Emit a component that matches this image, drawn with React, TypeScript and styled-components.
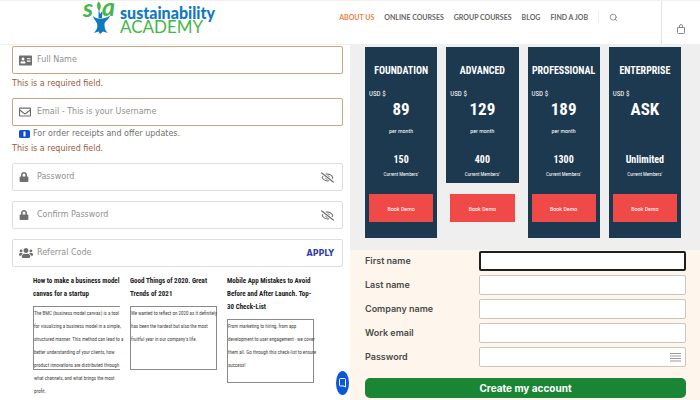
import React from 'react';
import styled, { createGlobalStyle } from 'styled-components';
import { FaAddressCard, FaLock, FaRegEnvelope, FaRegEyeSlash, FaUsers } from 'react-icons/fa';
import { Search } from 'lucide-react';

const condensed = '"Roboto Condensed", Roboto, "Liberation Sans", sans-serif';
const wide = '"DejaVu Sans", "Noto Sans", sans-serif';

const GlobalStyle = createGlobalStyle`
  *, *::before, *::after { box-sizing: border-box; }
  body { margin: 0; background: #fff; font-family: ${wide}; }
  h2, h3, p { margin: 0; }
  button, input { font: inherit; }
  button { cursor: pointer; }
  a { text-decoration: none; }
`;

const Page = styled.div`
  display: flex;
  flex-direction: column;
  min-height: 100vh;
`;

/* Header */
const Header = styled.header`
  display: flex;
  align-items: stretch;
  min-height: 45px;
  border-top: 1px solid #f3f1f0;
  border-bottom: 1px solid #f0eeec;
  background: #fff;
`;

const Brand = styled.a`
  display: flex;
  align-items: flex-start;
  gap: 2px;
  margin-left: 82px;
`;

const Wordmark = styled.span`
  display: flex;
  flex-direction: column;
  padding-top: 5px;
  font-family: Lato, sans-serif;
`;

const WordTop = styled.span`
  font-size: 16px;
  line-height: 14px;
  font-weight: 900;
  color: #1279bd;
`;

const WordBottom = styled.span`
  font-size: 17px;
  line-height: 14px;
  color: #45b649;
`;

const Nav = styled.nav`
  display: flex;
  align-items: center;
  align-self: flex-start;
  gap: 10px;
  height: 32px;
  margin-left: auto;
  font-family: Lato, sans-serif;
`;

const NavLink = styled.a<{ $active?: boolean }>`
  font-size: 7px;
  line-height: 10px;
  font-weight: 700;
  white-space: nowrap;
  color: ${p => (p.$active ? '#f0803c' : '#666')};
`;

const SearchButton = styled.button`
  display: flex;
  align-items: center;
  height: 12px;
  padding: 0 0 0 10px;
  border: 0;
  border-left: 1px solid #eee;
  background: none;
  color: #777;
`;

const CartButton = styled.button`
  display: flex;
  align-items: center;
  justify-content: center;
  width: 39px;
  margin-left: 43px;
  padding: 12px 0 0;
  border: 0;
  border-left: 1px solid #e4e4e4;
  background: none;
`;

/* Columns */
const Columns = styled.main`
  display: grid;
  grid-template-columns: repeat(2, minmax(0, 1fr));
  flex: 1;
`;

const LeftPanel = styled.div`
  position: relative;
  padding-top: 1px;
  background: #fff;
`;

const RightPanel = styled.div`
  display: flex;
  flex-direction: column;
`;

const SignUpForm = styled.form`
  display: flex;
  flex-direction: column;
  padding: 0 7px 0 12px;
`;

const Field = styled.div<{ $invalid?: boolean; $gap?: number }>`
  display: flex;
  align-items: center;
  gap: 4px;
  height: 28px;
  margin-top: ${p => p.$gap ?? 0}px;
  padding: 0 8px 0 6px;
  border: 1px solid ${p => (p.$invalid ? '#d0a37c' : '#dedede')};
  border-radius: 2px;
  color: #6e6e6e;
`;

const FieldIcon = styled.span`
  display: flex;
  width: 14px;
`;

const FieldInput = styled.input`
  flex: 1;
  min-width: 0;
  padding: 0;
  border: 0;
  outline: 0;
  background: none;
  font-size: 8px;
  line-height: 14px;
  color: #555;
  &::placeholder { color: #909090; opacity: 1; }
`;

const EyeButton = styled.button`
  display: flex;
  padding: 0;
  border: 0;
  background: none;
  color: #666;
`;

const ApplyButton = styled.button`
  padding: 0;
  border: 0;
  background: none;
  font-size: 8px;
  font-weight: 700;
  color: #2f3fa8;
`;

const FieldError = styled.p<{ $height: number }>`
  font-size: 8px;
  line-height: ${p => p.$height}px;
  color: #9a5a3c;
`;

const FieldNote = styled.p`
  display: flex;
  align-items: center;
  gap: 3px;
  padding-left: 7px;
  font-size: 8px;
  line-height: 16px;
  color: #707070;
`;

const Articles = styled.section`
  display: grid;
  grid-template-columns: repeat(3, minmax(0, 1fr));
  gap: 10px;
  padding: 8px 36px 0 33px;
  font-family: ${condensed};
`;

const ArticleTitle = styled.h3`
  font-size: 7px;
  line-height: 13px;
  font-weight: 700;
  white-space: nowrap;
  color: #222;
`;

const ArticleBox = styled.div<{ $open?: boolean }>`
  height: 64px;
  margin-top: 5px;
  border: 1px solid #8a8a8a;
  border-right-width: ${p => (p.$open ? 0 : 1)}px;
`;

const ArticleText = styled.p`
  font-size: 5px;
  line-height: 13px;
  white-space: nowrap;
  color: #444;
`;

const Line = styled.span`
  display: block;
`;

const ChatButton = styled.button`
  position: absolute;
  right: 1px;
  bottom: 5px;
  display: flex;
  align-items: center;
  justify-content: center;
  width: 13px;
  height: 24px;
  padding: 0;
  border: 0;
  border-radius: 50%;
  background: #0b57d8;
`;

/* Pricing */
const Pricing = styled.section`
  display: grid;
  grid-template-columns: repeat(4, minmax(0, 1fr));
  gap: 9px;
  padding: 2px 19px 12px 15px;
  background: #efefef;
  font-family: ${condensed};
  text-align: center;
  color: #fff;
`;

const Plan = styled.article`
  display: flex;
  flex-direction: column;
`;

const PlanInfo = styled.div`
  padding: 16px 4px 3px;
  background: #1d394f;
`;

const PlanName = styled.h2`
  font-size: 10px;
  line-height: 16px;
  font-weight: 700;
  display: flex;
  justify-content: center;
  white-space: nowrap;
`;

const Currency = styled.p`
  margin-top: 9px;
  font-size: 7px;
  line-height: 12px;
  text-align: left;
`;

const Price = styled.p`
  font-size: 17px;
  line-height: 18px;
  font-weight: 700;
`;

const Period = styled.p`
  height: 14px;
  margin-top: 6px;
  font-size: 6px;
  line-height: 14px;
`;

const Members = styled.p`
  margin-top: 14px;
  font-size: 10px;
  line-height: 16px;
  font-weight: 700;
`;

const MembersLabel = styled.p`
  font-size: 5px;
  line-height: 12px;
`;

const PlanAction = styled.div<{ $bare?: boolean }>`
  padding: 11px 4px 16px;
  background: ${p => (p.$bare ? 'transparent' : '#1d394f')};
`;

const DemoButton = styled.button`
  display: block;
  width: 100%;
  height: 28px;
  padding: 0;
  border: 0;
  background: #ef4a47;
  font-size: 6px;
  color: #fff;
`;

/* Account form */
const AccountForm = styled.form`
  display: flex;
  flex: 1;
  flex-direction: column;
  gap: 4px;
  padding: 1px 14px 2px 15px;
  background: #fef6ed;
  font-family: Inter, sans-serif;
`;

const AccountRow = styled.div`
  display: grid;
  grid-template-columns: 114px 1fr;
  align-items: center;
`;

const AccountLabel = styled.label`
  font-size: 9px;
  line-height: 14px;
  font-weight: 600;
  color: #4a4a48;
`;

const InputWrap = styled.div<{ $active?: boolean }>`
  display: flex;
  align-items: center;
  height: 20px;
  padding: 0 4px;
  border: ${p => (p.$active ? '2px solid #1f1f1f' : '1px solid #c9c5bf')};
  border-radius: 2px;
  background: #fff;
`;

const AccountInput = styled.input`
  flex: 1;
  min-width: 0;
  padding: 0;
  border: 0;
  outline: 0;
  background: none;
  font-size: 10px;
  line-height: 14px;
  color: #333;
`;

const CreateButton = styled.button`
  height: 20px;
  margin-top: 7px;
  padding: 0;
  border: 0;
  border-radius: 5px;
  background: #1a8535;
  font-size: 10px;
  font-weight: 700;
  color: #fff;
`;

const navItems = ['ABOUT US', 'ONLINE COURSES', 'GROUP COURSES', 'BLOG', 'FIND A JOB'];

const articles = [
  {
    title: ['How to make a business model', 'canvas for a startup'],
    text: [
      'The BMC (business model canvas) is a tool',
      'for visualizing a business model in a simple,',
      'structured manner. This method can lead to a',
      'better understanding of your clients, how',
      'product innovations are distributed through',
      'what channels, and what brings the most',
      'profit.',
    ],
    open: true,
  },
  {
    title: ['Good Things of 2020. Great', 'Trends of 2021'],
    text: [
      'We wanted to reflect on 2020 as it definitely',
      'has been the hardest but also the most',
      "fruitful year in our company's life.",
    ],
  },
  {
    title: ['Mobile App Mistakes to Avoid', 'Before and After Launch. Top-', '30 Check-List'],
    text: [
      'From marketing to hiring, from app',
      'development to user engagement - we cover',
      'them all. Go through this check-list to ensure',
      'success!',
    ],
  },
];

const plans = [
  { name: 'FOUNDATION', price: '89', period: 'per month', members: '150' },
  { name: 'ADVANCED', price: '129', period: 'per month', members: '400', bare: true },
  { name: 'PROFESSIONAL', price: '189', period: 'per month', members: '1300' },
  { name: 'ENTERPRISE', price: 'ASK', period: '', members: 'Unlimited' },
];

const accountFields = [
  { id: 'first-name', label: 'First name', type: 'text' },
  { id: 'last-name', label: 'Last name', type: 'text' },
  { id: 'company-name', label: 'Company name', type: 'text' },
  { id: 'work-email', label: 'Work email', type: 'email' },
  { id: 'account-password', label: 'Password', type: 'password' },
];

const Logo = () => (
  <svg width="36" height="34" viewBox="0 0 36 34" overflow="visible" aria-hidden="true">
    <text x="1" y="16" fontFamily="Lato, sans-serif" fontStyle="italic" fontWeight="700" fontSize="25" fill="#45b649">s</text>
    <text x="20" y="15" fontFamily="Lato, sans-serif" fontStyle="italic" fontWeight="700" fontSize="25" fill="#45b649">a</text>
    <path d="M16.500 0.500 C19.500 3 19.500 7 17 10 C14.500 7 14.500 3 16.500 0.500Z" fill="#45b649" />
    <path d="M16.500 17 C16.500 13 16.500 11 17 8 L18 13 L20.500 10 L20 17 Z" fill="#1279bd" />
    <path d="M11 15 C13 17 15 17.500 18 17.500 C21 17.500 25 17 28 14.500 C27 19 22.500 20 22.500 23 C22.500 27 23 29.500 26 32 L21 30.500 L18 33 L16.500 30.500 L12 32 C15 28.500 16 26 15 22.500 C14 19.500 11.500 18.500 11 15Z" fill="#1279bd" />
  </svg>
);

const Toggle = () => (
  <EyeButton type="button" aria-label="Show password">
    <FaRegEyeSlash size={13} />
  </EyeButton>
);

export default function App() {
  return (
    <Page>
      <GlobalStyle />
      <Header>
        <Brand href="#" aria-label="Sustainability Academy">
          <Logo />
          <Wordmark>
            <WordTop>sustainability</WordTop>
            <WordBottom>ACADEMY</WordBottom>
          </Wordmark>
        </Brand>
        <Nav>
          {navItems.map((item, i) => (
            <NavLink key={item} href="#" $active={i === 0}>{item}</NavLink>
          ))}
          <SearchButton type="button" aria-label="Search"><Search size={9} strokeWidth={2} /></SearchButton>
        </Nav>
        <CartButton type="button" aria-label="Cart">
          <svg width="8" height="10" viewBox="0 0 8 10" fill="none" stroke="#8a8a8a">
            <path d="M0.500 3.500 h7 v5 q0 1 -1 1 h-5 q-1 0 -1 -1 z" />
            <path d="M2.500 4 V2 q0 -1.500 1.500 -1.500 t1.500 1.500 V4" />
          </svg>
        </CartButton>
      </Header>

      <Columns>
        <LeftPanel>
          <SignUpForm>
            <Field $invalid>
              <FieldIcon><FaAddressCard size={13} /></FieldIcon>
              <FieldInput aria-label="Full Name" placeholder="Full Name" />
            </Field>
            <FieldError $height={20}>This is a required field.</FieldError>
            <Field $invalid $gap={4}>
              <FieldIcon><FaRegEnvelope size={12} /></FieldIcon>
              <FieldInput type="email" aria-label="Email" placeholder="Email - This is your Username" />
            </Field>
            <FieldNote>
              <svg width="11" height="8" viewBox="0 0 11 8" aria-hidden="true">
                <rect width="11" height="8" rx="1.500" fill="#0f4fd0" />
                <rect x="4.500" y="1.500" width="2" height="5" fill="#fff" />
              </svg>
              For order receipts and offer updates.
            </FieldNote>
            <FieldError $height={14}>This is a required field.</FieldError>
            <Field $gap={7}>
              <FieldIcon><FaLock size={10} /></FieldIcon>
              <FieldInput type="password" aria-label="Password" placeholder="Password" />
              <Toggle />
            </Field>
            <Field $gap={10}>
              <FieldIcon><FaLock size={10} /></FieldIcon>
              <FieldInput type="password" aria-label="Confirm Password" placeholder="Confirm Password" />
              <Toggle />
            </Field>
            <Field $gap={10}>
              <FieldIcon><FaUsers size={14} /></FieldIcon>
              <FieldInput aria-label="Referral Code" placeholder="Referral Code" />
              <ApplyButton type="button">APPLY</ApplyButton>
            </Field>
          </SignUpForm>

          <Articles>
            {articles.map(a => (
              <article key={a.title[0]}>
                <ArticleTitle>{a.title.map(l => <Line key={l}>{l}</Line>)}</ArticleTitle>
                <ArticleBox $open={a.open}>
                  <ArticleText>{a.text.map(l => <Line key={l}>{l}</Line>)}</ArticleText>
                </ArticleBox>
              </article>
            ))}
          </Articles>

          <ChatButton type="button" aria-label="Chat">
            <svg width="7" height="10" viewBox="0 0 7 10" fill="none" stroke="#fff">
              <path d="M1.500 0.500 h4 q1 0 1 1 v7.500 l-1.500 -1 h-3.500 q-1 0 -1 -1 v-5.500 q0 -1 1 -1z" />
            </svg>
          </ChatButton>
        </LeftPanel>

        <RightPanel>
          <Pricing>
            {plans.map(p => (
              <Plan key={p.name}>
                <PlanInfo>
                  <PlanName>{p.name}</PlanName>
                  <Currency>USD $</Currency>
                  <Price>{p.price}</Price>
                  <Period>{p.period}</Period>
                  <Members>{p.members}</Members>
                  <MembersLabel>Current Members'</MembersLabel>
                </PlanInfo>
                <PlanAction $bare={p.bare}>
                  <DemoButton type="button">Book Demo</DemoButton>
                </PlanAction>
              </Plan>
            ))}
          </Pricing>

          <AccountForm>
            {accountFields.map((f, i) => (
              <AccountRow key={f.id}>
                <AccountLabel htmlFor={f.id}>{f.label}</AccountLabel>
                <InputWrap $active={i === 0}>
                  <AccountInput id={f.id} type={f.type} autoFocus={i === 0} />
                  {f.type === 'password' && (
                    <svg width="11" height="9" viewBox="0 0 11 9" stroke="#999" aria-hidden="true">
                      <path d="M0 0.500h11M0 3h11M0 5.500h11M0 8h11" />
                    </svg>
                  )}
                </InputWrap>
              </AccountRow>
            ))}
            <CreateButton type="submit">Create my account</CreateButton>
          </AccountForm>
        </RightPanel>
      </Columns>
    </Page>
  );
}
